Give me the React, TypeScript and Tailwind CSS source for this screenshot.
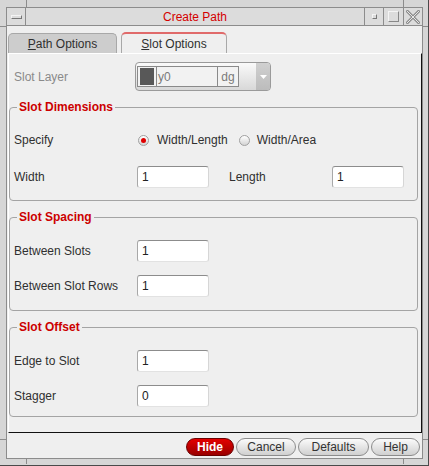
import type { ReactNode } from "react";

const FONT = { fontFamily: '"Liberation Sans", Arial, sans-serif' };

function Field({ value }: { value: string }) {
  return (
    <div className="flex h-[22px] w-[72px] items-center rounded-[3px] border border-t-[#8c8c8c] border-l-[#a8a8a8] border-r-[#d6d6d6] border-b-[#e2e2e2] bg-white pl-[4px] text-[12px] text-[#222]">
      {value}
    </div>
  );
}

function Radio({ checked }: { checked?: boolean }) {
  return (
    <span className="flex h-[11px] w-[11px] items-center justify-center rounded-full border border-[#a0a0a0] bg-gradient-to-b from-[#ffffff] to-[#d4d4d4]">
      {checked && <span className="h-[5px] w-[5px] rounded-full bg-[#e00000]" />}
    </span>
  );
}

function Group({ title, children, className }: { title: string; children: ReactNode; className?: string }) {
  return (
    <fieldset className={`mr-[3px] rounded-[4px] border border-[#a4a4a4] px-[4px] ${className ?? ""}`}>
      <legend className="ml-[3px] px-[2px] text-[12px] font-bold leading-[14px] text-[#cc0000]">{title}</legend>
      {children}
    </fieldset>
  );
}

function Row({ label, children }: { label: string; children: ReactNode }) {
  return (
    <div className="flex h-[22px] items-center">
      <span className="w-[123px] text-[12px] text-[#303030]">{label}</span>
      {children}
    </div>
  );
}

export default function App() {
  return (
    <div
      className="relative h-[466px] w-[429px] border-b border-r border-[#4a4a4a] bg-[#d6d6d6] pb-[6px] pl-[6px] pr-[5px] pt-[7px]"
      style={FONT}
    >
      {/* frame corner ticks */}
      <div className="absolute left-[26px] top-0 h-[7px] w-px bg-[#8c8c8c]" />
      <div className="absolute left-[403px] top-0 h-[7px] w-px bg-[#8c8c8c]" />
      <div className="absolute bottom-[1px] left-[26px] h-[6px] w-px bg-[#8c8c8c]" />
      <div className="absolute bottom-[1px] left-[403px] h-[6px] w-px bg-[#8c8c8c]" />
      <div className="absolute left-0 top-[26px] h-px w-[6px] bg-[#8c8c8c]" />
      <div className="absolute left-0 top-[439px] h-px w-[6px] bg-[#8c8c8c]" />
      <div className="absolute right-0 top-[26px] h-px w-[5px] bg-[#8c8c8c]" />
      <div className="absolute right-0 top-[439px] h-px w-[5px] bg-[#8c8c8c]" />

      <div className="flex h-full flex-col border border-[#8c8c8c]">
        {/* title bar */}
        <div className="flex h-[18px] border-b border-[#8c8c8c] bg-[#dcdcdc]">
          <div className="flex w-[19px] items-center justify-center border-r border-[#8c8c8c]">
            <span className="h-[4px] w-[11px] border border-t-[#f4f4f4] border-l-[#f4f4f4] border-r-[#777] border-b-[#777] bg-[#dcdcdc]" />
          </div>
          <div className="flex flex-1 items-center justify-center text-[12px] text-[#d40000]">Create Path</div>
          <div className="flex w-[19px] items-center justify-center border-l border-[#8c8c8c]">
            <span className="h-[5px] w-[5px] border border-t-[#f4f4f4] border-l-[#f4f4f4] border-r-[#777] border-b-[#777]" />
          </div>
          <div className="flex w-[20px] items-center justify-center border-l border-[#8c8c8c]">
            <span className="h-[11px] w-[11px] border border-t-[#f4f4f4] border-l-[#f4f4f4] border-r-[#888] border-b-[#888]" />
          </div>
          <div className="flex w-[19px] items-center justify-center border-l border-[#8c8c8c]">
            <svg width="14" height="14" viewBox="0 0 14 14">
              <path d="M1 1 L13 13 M13 1 L1 13" stroke="#8c8c8c" strokeWidth="3" strokeLinecap="square" />
              <path d="M1 1 L13 13 M13 1 L1 13" stroke="#e6e6e6" strokeWidth="1" strokeLinecap="square" />
            </svg>
          </div>
        </div>

        <div className="flex flex-1 flex-col bg-[#efefef]">
          {/* tabs */}
          <div className="flex h-[27px] items-end gap-[4px] pl-[1px]">
            <div className="flex h-[20px] w-[109px] items-center justify-center rounded-t-[5px] border border-b-0 border-[#a8a8a8] bg-[#cdcdcd] text-[12px] text-[#303030]">
              <span>
                <span className="underline">P</span>ath Options
              </span>
            </div>
            <div className="flex h-[21px] w-[106px] items-center justify-center rounded-t-[5px] border border-b-0 border-t-2 border-[#a8a8a8] border-t-[#e06a6a] bg-[#efefef] text-[12px] text-[#303030]">
              <span>
                <span className="underline">S</span>lot Options
              </span>
            </div>
          </div>

          {/* panel */}
          <div className="ml-[1px] flex h-[380px] flex-col border border-b-[#111] border-l-white border-r-[#111] border-t-white bg-[#efefef]">
            <div className="flex h-[29px] items-center pl-[5px] mt-[8px]">
              <span className="w-[121px] text-[12px] text-[#8a8a8a]">Slot Layer</span>
              <div className="flex h-[29px] w-[136px] items-center rounded-[4px] border border-[#9a9a9a] bg-gradient-to-b from-[#fafafa] to-[#d8d8d8] pl-[1px]">
                <div className="flex h-[21px] w-[20px] items-center justify-center border border-[#8a8a8a] bg-[#f2f2f2]">
                  <span className="h-[17px] w-[14px] bg-[#585858]" />
                </div>
                <div className="flex h-[21px] w-[61px] items-center border-y border-r border-[#8a8a8a] bg-[#f2f2f2] pl-[1px] text-[12px] text-[#7a7a7a]">
                  y0
                </div>
                <div className="flex h-[21px] w-[21px] items-center justify-center border-y border-r border-[#8a8a8a] bg-[#f2f2f2] text-[12px] text-[#7a7a7a]">
                  dg
                </div>
                <div className="h-full w-[17px]" />
                <div className="flex h-full flex-1 items-center justify-center rounded-r-[3px] bg-gradient-to-b from-[#d0d0d0] to-[#bcbcbc]">
                  <svg width="7" height="4" viewBox="0 0 7 4">
                    <path d="M0 0 L7 0 L3.5 4 Z" fill="#ffffff" />
                  </svg>
                </div>
              </div>
            </div>

            <Group title="Slot Dimensions" className="mt-[9px] pb-[12px] pt-[15px]">
              <div className="flex h-[22px] items-center">
                <span className="w-[124px] text-[12px] text-[#303030]">Specify</span>
                <Radio checked />
                <span className="ml-[8px] text-[12px] text-[#303030]">Width/Length</span>
                <span className="ml-[11px]">
                  <Radio />
                </span>
                <span className="ml-[7px] text-[12px] text-[#303030]">Width/Area</span>
              </div>
              <div className="mt-[15px] flex h-[22px] items-center">
                <span className="w-[123px] text-[12px] text-[#303030]">Width</span>
                <Field value="1" />
                <span className="ml-[20px] w-[103px] text-[12px] text-[#303030]">Length</span>
                <Field value="1" />
              </div>
            </Group>

            <Group title="Slot Spacing" className="mt-[9px] pb-[13px] pt-[16px]">
              <Row label="Between Slots">
                <Field value="1" />
              </Row>
              <div className="mt-[13px]">
                <Row label="Between Slot Rows">
                  <Field value="1" />
                </Row>
              </div>
            </Group>

            <Group title="Slot Offset" className="mt-[9px] pb-[9px] pt-[16px]">
              <Row label="Edge to Slot">
                <Field value="1" />
              </Row>
              <div className="mt-[13px]">
                <Row label="Stagger">
                  <Field value="0" />
                </Row>
              </div>
            </Group>
          </div>

          {/* buttons */}
          <div className="flex flex-1 items-start justify-end gap-[2px] pr-[2px] pt-[5px]">
            <button className="flex h-[18px] w-[48px] items-center justify-center rounded-full border border-[#6a0000] bg-gradient-to-b from-[#e40000] to-[#9a0000] text-[12px] font-bold text-white">
              Hide
            </button>
            <button className="flex h-[18px] w-[60px] items-center justify-center rounded-full border border-[#8c8c8c] bg-gradient-to-b from-[#fbfbfb] to-[#d0d0d0] text-[12px] text-[#333]">
              Cancel
            </button>
            <button className="flex h-[18px] w-[71px] items-center justify-center rounded-full border border-[#8c8c8c] bg-gradient-to-b from-[#fbfbfb] to-[#d0d0d0] text-[12px] text-[#333]">
              Defaults
            </button>
            <button className="flex h-[18px] w-[49px] items-center justify-center rounded-full border border-[#8c8c8c] bg-gradient-to-b from-[#fbfbfb] to-[#d0d0d0] text-[12px] text-[#333]">
              Help
            </button>
          </div>
        </div>
      </div>
    </div>
  );
}
